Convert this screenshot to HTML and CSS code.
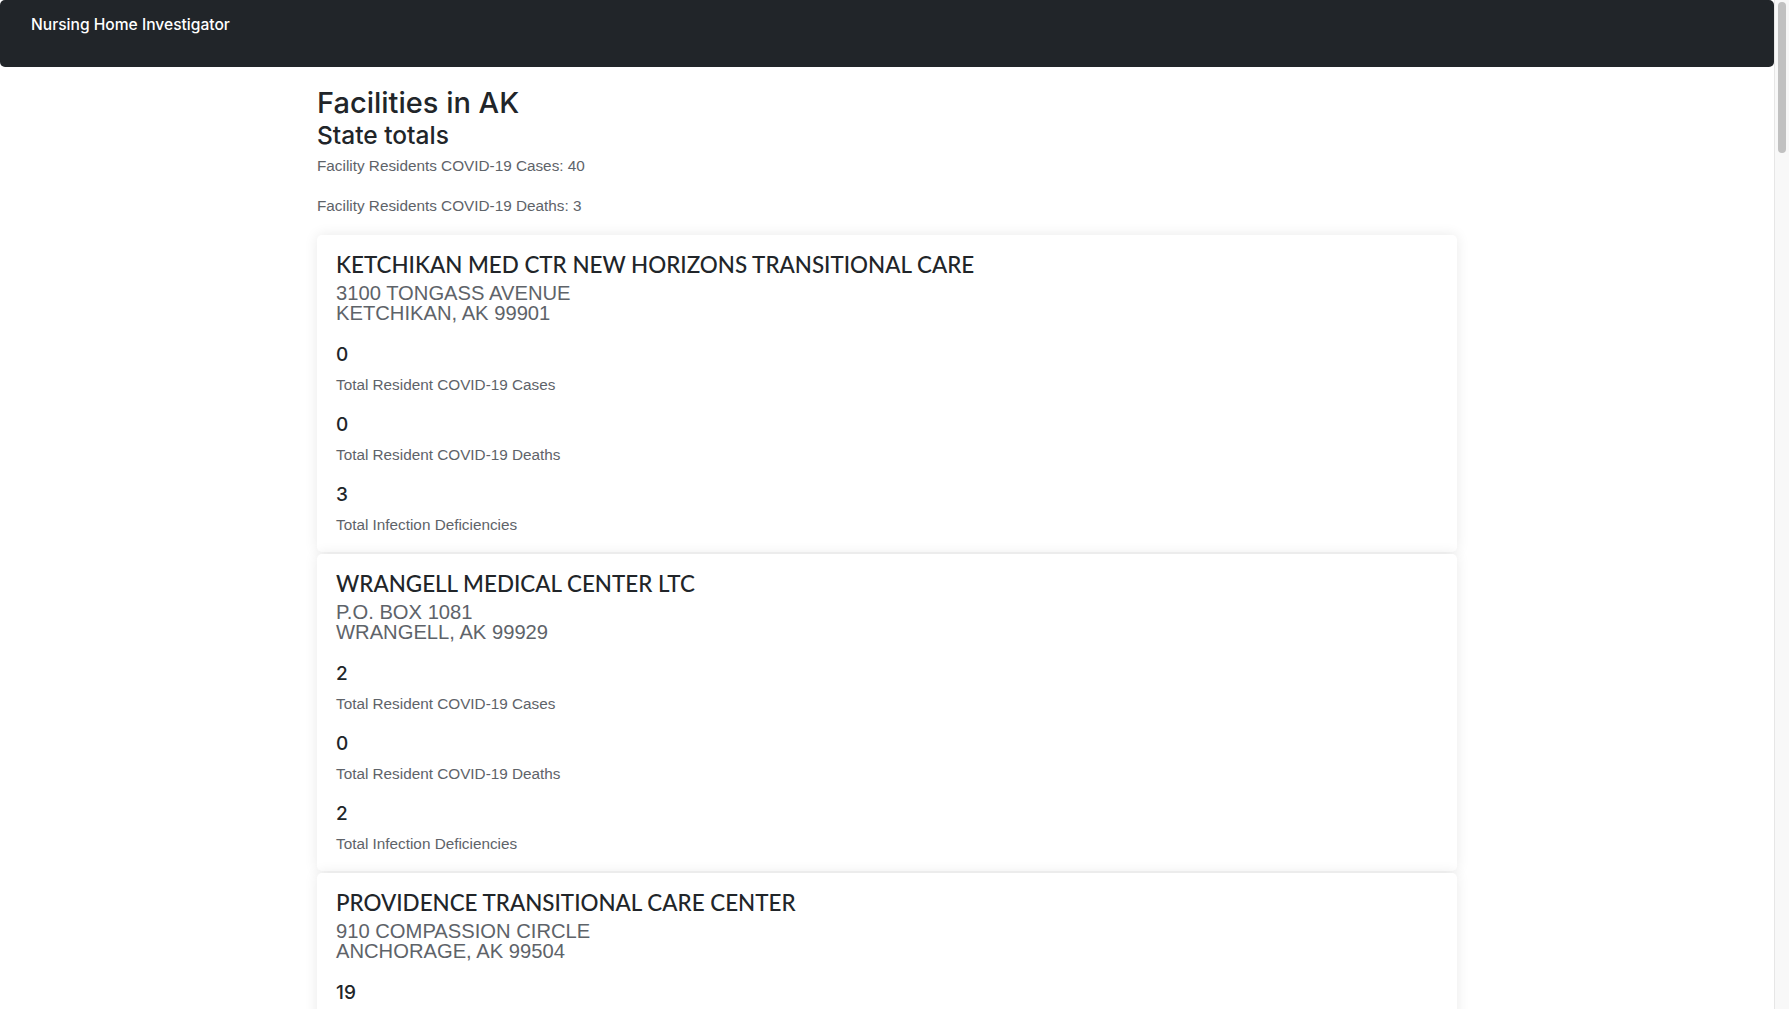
FILE: index.html
```html
<!DOCTYPE html>
<html lang="en">
<head>
<meta charset="utf-8">
<title>Nursing Home Investigator</title>
<link rel="stylesheet" href="styles.css">
</head>
<body>
<nav class="navbar">
  <span class="brand">Nursing Home Investigator</span>
</nav>
<main class="container">
  <h1 class="page-title">Facilities in AK</h1>
  <h2 class="section-title">State totals</h2>
  <p class="total">Facility Residents COVID-19 Cases: 40</p>
  <p class="total total-last">Facility Residents COVID-19 Deaths: 3</p>

  <section class="card">
    <h3 class="card-title">KETCHIKAN MED CTR NEW HORIZONS TRANSITIONAL CARE</h3>
    <div class="address">3100 TONGASS AVENUE<br>KETCHIKAN, AK 99901</div>
    <div class="stats">
      <div class="stat"><div class="num">0</div><p class="label">Total Resident COVID-19 Cases</p></div>
      <div class="stat"><div class="num">0</div><p class="label">Total Resident COVID-19 Deaths</p></div>
      <div class="stat"><div class="num">3</div><p class="label">Total Infection Deficiencies</p></div>
    </div>
  </section>

  <section class="card">
    <h3 class="card-title">WRANGELL MEDICAL CENTER LTC</h3>
    <div class="address">P.O. BOX 1081<br>WRANGELL, AK 99929</div>
    <div class="stats">
      <div class="stat"><div class="num">2</div><p class="label">Total Resident COVID-19 Cases</p></div>
      <div class="stat"><div class="num">0</div><p class="label">Total Resident COVID-19 Deaths</p></div>
      <div class="stat"><div class="num">2</div><p class="label">Total Infection Deficiencies</p></div>
    </div>
  </section>

  <section class="card">
    <h3 class="card-title">PROVIDENCE TRANSITIONAL CARE CENTER</h3>
    <div class="address">910 COMPASSION CIRCLE<br>ANCHORAGE, AK 99504</div>
    <div class="stats">
      <div class="stat"><div class="num">19</div><p class="label">Total Resident COVID-19 Cases</p></div>
      <div class="stat"><div class="num">2</div><p class="label">Total Resident COVID-19 Deaths</p></div>
      <div class="stat"><div class="num">1</div><p class="label">Total Infection Deficiencies</p></div>
    </div>
  </section>

  <section class="card">
    <h3 class="card-title">PROVIDENCE SEWARD MOUNTAIN HAVEN</h3>
    <div class="address">2203 OAK STREET<br>SEWARD, AK 99664</div>
    <div class="stats">
      <div class="stat"><div class="num">0</div><p class="label">Total Resident COVID-19 Cases</p></div>
      <div class="stat"><div class="num">0</div><p class="label">Total Resident COVID-19 Deaths</p></div>
      <div class="stat"><div class="num">1</div><p class="label">Total Infection Deficiencies</p></div>
    </div>
  </section>
</main>
<div class="scrollbar" aria-hidden="true"><div class="scroll-thumb"></div></div>
</body>
</html>
```

FILE: styles.css
```css
* { box-sizing: border-box; }

body {
  margin: 0;
  padding-right: 15px;
  background: #ffffff;
  color: #212529;
  font-family: "Liberation Sans", Arial, sans-serif;
}

/* scrollbar track drawn over the right edge of the window */
.scrollbar {
  position: fixed;
  top: 0;
  right: 0;
  width: 15px;
  height: 100vh;
  background: #f8f8f8;
  border-left: 1px solid #e6e6e6;
  padding: 2px 3px 0 3px;
}

.scroll-thumb {
  height: 151px;
  background: #c1c1c1;
  border-radius: 4px;
}

.navbar {
  height: 67px;
  background: #212529;
  border-radius: 5px;
  padding: 12px 31px;
}

.brand {
  display: block;
  font-family: Inter, "Noto Sans", sans-serif;
  font-weight: 500;
  font-size: 15.6px;
  line-height: 26px;
  color: #ffffff;
}

.container {
  max-width: 1140px;
  margin: 0 auto;
  padding-top: 17px;
}

.page-title {
  margin: 0;
  font-family: Inter, "Noto Sans", sans-serif;
  font-weight: 500;
  font-size: 29px;
  line-height: 37px;
  color: #212529;
}

.section-title {
  margin: 0 0 6px;
  font-family: Inter, "Noto Sans", sans-serif;
  font-weight: 500;
  font-size: 24.5px;
  line-height: 28px;
  color: #212529;
}

.total {
  margin: 0 0 18px;
  font-size: 15.3px;
  line-height: 22px;
  color: #5e6369;
}

.total-last { margin-bottom: 18px; }

.card {
  background: #ffffff;
  border-radius: 5px;
  box-shadow: 0 0 14px rgba(0, 0, 0, 0.09);
  padding: 17px 19px 16px;
  margin-bottom: 2px;
}

.card-title {
  margin: 0;
  font-family: Lato, Inter, sans-serif;
  font-weight: 500;
  font-size: 22.4px;
  line-height: 26px;
  color: #212529;
}

.address {
  margin-top: 6px;
  font-size: 20.2px;
  line-height: 19.5px;
  color: #5e6369;
}

.stats {
  display: flex;
  flex-direction: column;
  gap: 16px;
  margin-top: 19px;
}

.num {
  font-family: Inter, "Noto Sans", sans-serif;
  font-weight: 500;
  font-size: 19px;
  line-height: 26px;
  color: #212529;
}

.label {
  margin: 6px 0 0;
  font-size: 15.3px;
  line-height: 22px;
  color: #5e6369;
}
```
